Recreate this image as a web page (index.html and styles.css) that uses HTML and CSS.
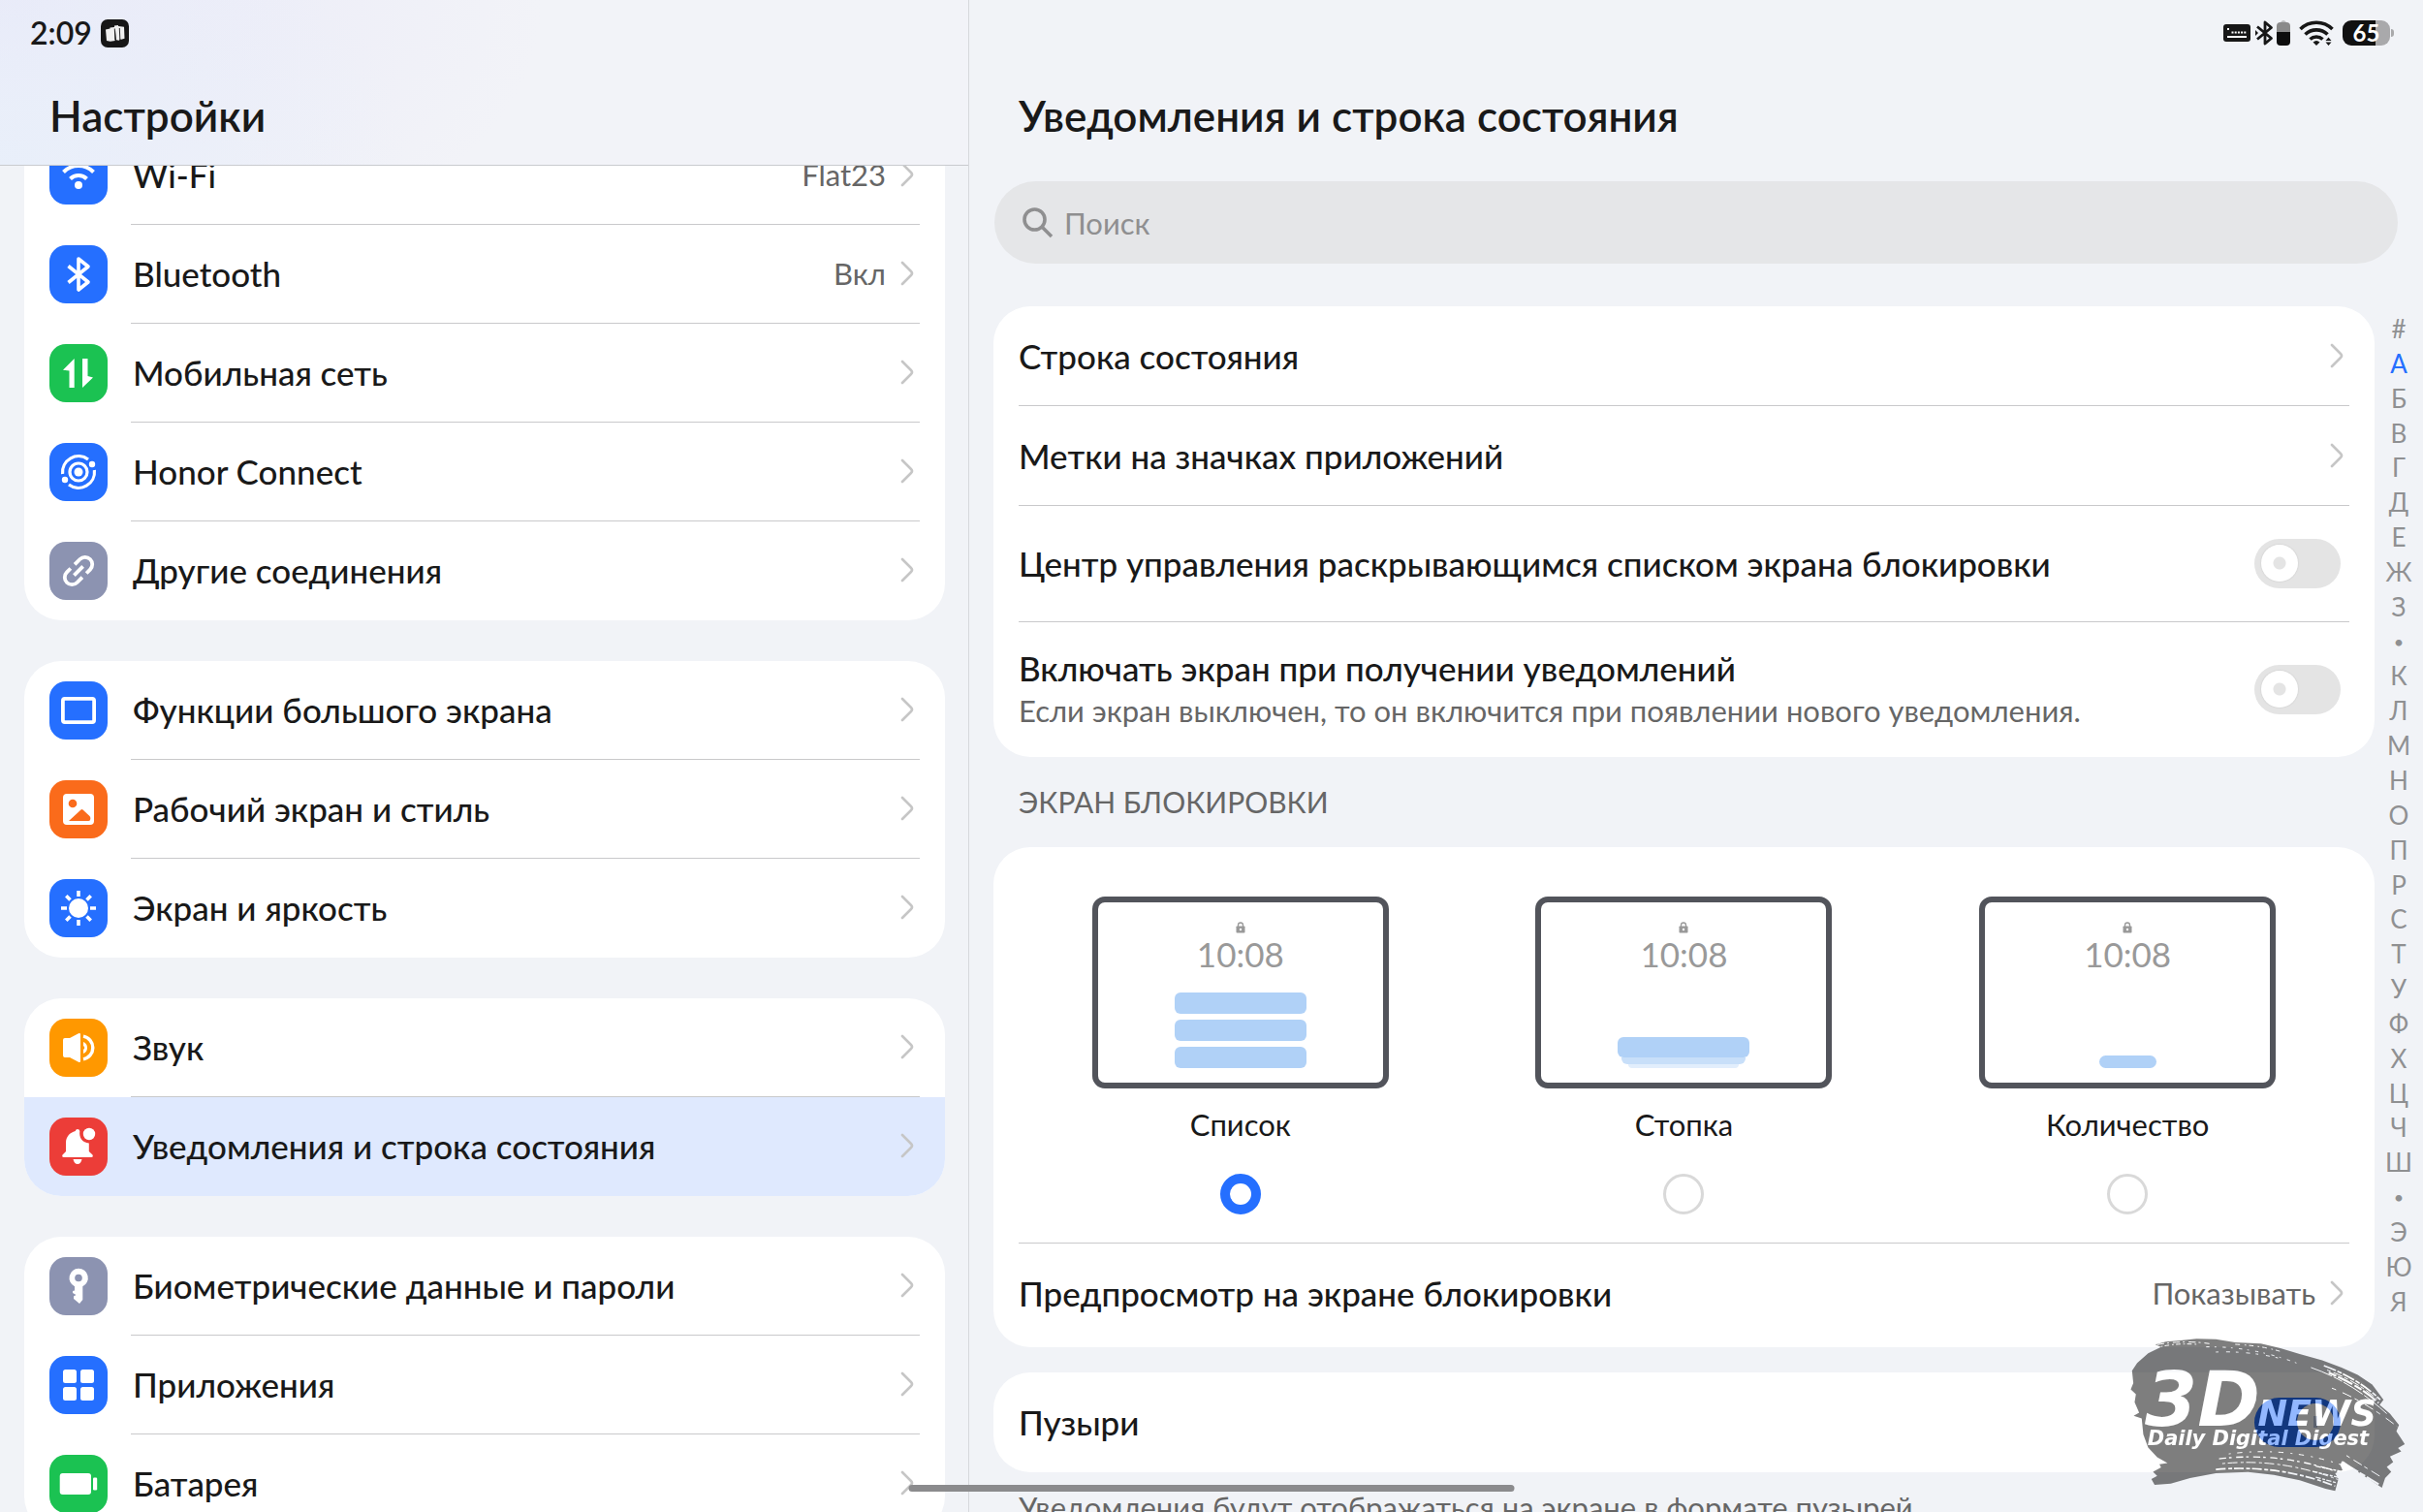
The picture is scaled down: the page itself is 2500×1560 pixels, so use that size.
FILE: index.html
```
<!DOCTYPE html>
<html lang="ru">
<head>
    <meta charset="UTF-8">
    <meta name="viewport" content="width=device-width, initial-scale=1.0">
    <title>Настройки</title>
    <link rel="stylesheet" href="styles.css">
</head>
<body>
    <!-- Общие символы -->
    <svg class="defs" aria-hidden="true">
        <symbol id="chevron" viewBox="0 0 14 26">
            <path d="M2 2l9 9q2 2 0 4l-9 9" fill="none" stroke="#c6c6c6" stroke-width="2.6" stroke-linecap="round"/>
        </symbol>
        <symbol id="lock" viewBox="0 0 10 12">
            <path d="M2.5 5V3.500a2.500 2.500 0 0 1 5 0V5" fill="none" stroke="#999" stroke-width="1.300"/>
            <rect x="0.500" y="4.500" width="9" height="7" rx="0.800" fill="#999"/>
            <circle cx="5" cy="8" r="1.200" fill="#fff"/>
        </symbol>
    </svg>

    <!-- Левая панель -->
    <aside class="sidebar">
        <header class="sidebar-header">
            <div class="status-bar">
                <span class="clock">2:09</span>
                <svg class="app-badge" viewBox="0 0 29 29">
                    <rect width="29" height="29" rx="7" fill="#171717"/>
                    <path d="M5 10.500l4.500-1v-1l4.500-.5v-1.500l4-.5v1l6 .8.5 12-3.500 1-1.500-1-.5 2-3-.5-1-10-.5.2.300 10.500-5 .8L6 22z" fill="#f0f0f0"/>
                    <path d="M14.300 9.500l.6 12M19.300 9l.5 11" stroke="#171717" stroke-width=".9"/>
                </svg>
            </div>
            <h1>Настройки</h1>
        </header>

        <nav class="menu">
            <ul class="card">
                <li><a class="menu-row" href="#wifi">
                    <svg class="icon blue" viewBox="0 0 60 60"><g fill="none" stroke="#fff" stroke-width="4"><path d="M14.500 26.500a22 22 0 0 1 31 0M21.500 33.500a12 12 0 0 1 17 0"/></g><circle cx="30" cy="40" r="4" fill="#fff"/></svg>
                    <span class="menu-body"><span class="menu-title">Wi-Fi</span><span class="value">Flat23</span><svg class="chevron"><use href="#chevron"/></svg></span>
                </a></li>
                <li><a class="menu-row" href="#bluetooth">
                    <svg class="icon blue" viewBox="0 0 60 60"><path d="M19.500 21.500L40 38l-10 8V14l10 8-20.500 16.500" fill="none" stroke="#fff" stroke-width="3.600" stroke-linejoin="round"/></svg>
                    <span class="menu-body"><span class="menu-title">Bluetooth</span><span class="value">Вкл</span><svg class="chevron"><use href="#chevron"/></svg></span>
                </a></li>
                <li><a class="menu-row" href="#mobile">
                    <svg class="icon green" viewBox="0 0 60 60"><path d="M25.700 15v30h-5.200V27.500L14 26.700zM34 15h5.500v18l5.500 1.500L34 45z" fill="#fff"/></svg>
                    <span class="menu-body"><span class="menu-title">Мобильная сеть</span><svg class="chevron"><use href="#chevron"/></svg></span>
                </a></li>
                <li><a class="menu-row" href="#connect">
                    <svg class="icon blue" viewBox="0 0 60 60"><g fill="none" stroke="#fff" stroke-width="3.200"><circle cx="30" cy="30" r="9"/><path d="M40 17A16.500 16.500 0 0 0 13.600 32M20 43A16.500 16.500 0 0 0 46.400 28"/></g><g fill="#fff"><circle cx="30" cy="30" r="4.500"/><circle cx="44" cy="22" r="3.200"/><circle cx="16" cy="38" r="3.200"/></g></svg>
                    <span class="menu-body"><span class="menu-title">Honor Connect</span><svg class="chevron"><use href="#chevron"/></svg></span>
                </a></li>
                <li><a class="menu-row" href="#other">
                    <svg class="icon grey" viewBox="0 0 60 60"><path transform="rotate(-45 30 30)" d="M32 22.500h7.500a7.500 7.500 0 0 1 0 15H34M28 37.500h-7.500a7.500 7.500 0 0 1 0-15H26M23.500 30h13" fill="none" stroke="#fff" stroke-width="3.800"/></svg>
                    <span class="menu-body"><span class="menu-title">Другие соединения</span><svg class="chevron"><use href="#chevron"/></svg></span>
                </a></li>
            </ul>

            <ul class="card">
                <li><a class="menu-row" href="#bigscreen">
                    <svg class="icon blue" viewBox="0 0 60 60"><rect x="13.900" y="17.900" width="32.200" height="24.200" rx="2" fill="none" stroke="#fff" stroke-width="3.800"/></svg>
                    <span class="menu-body"><span class="menu-title">Функции большого экрана</span><svg class="chevron"><use href="#chevron"/></svg></span>
                </a></li>
                <li><a class="menu-row" href="#home">
                    <svg class="icon orange" viewBox="0 0 60 60"><rect x="14" y="14" width="32" height="32" rx="4" fill="#fff"/><circle cx="24" cy="24" r="4.300" fill="#fa6b1b"/><path d="M20 42l12.500-11.500q1-1 2 0l7 6.500q.8.800.800 2v1q0 2-2 2z" fill="#fa6b1b"/></svg>
                    <span class="menu-body"><span class="menu-title">Рабочий экран и стиль</span><svg class="chevron"><use href="#chevron"/></svg></span>
                </a></li>
                <li><a class="menu-row" href="#display">
                    <svg class="icon blue" viewBox="0 0 60 60"><circle cx="30" cy="30" r="10" fill="#fff"/><path d="M30 12v6M30 42v6M12 30h6M42 30h6M17.300 17.300l4.200 4.200M38.500 38.500l4.200 4.200M17.300 42.700l4.200-4.200M38.500 21.500l4.200-4.200" stroke="#fff" stroke-width="3.600"/></svg>
                    <span class="menu-body"><span class="menu-title">Экран и яркость</span><svg class="chevron"><use href="#chevron"/></svg></span>
                </a></li>
            </ul>

            <ul class="card">
                <li><a class="menu-row" href="#sound">
                    <svg class="icon amber" viewBox="0 0 60 60"><path d="M14 22q0-2 2-2h5l9-4.700q2-.8 2 1v27.400q0 1.800-2 1L21 40h-5q-2 0-2-2z" fill="#fff"/><g fill="none" stroke="#fff" stroke-width="3.400"><path d="M35 18.200a12 12 0 0 1 0 23.600"/></g><path d="M35 24a6.500 6.500 0 0 1 0 12v-4q2.500-2 0-4z" fill="#fff"/></svg>
                    <span class="menu-body"><span class="menu-title">Звук</span><svg class="chevron"><use href="#chevron"/></svg></span>
                </a></li>
                <li><a class="menu-row active" href="#notifications" aria-current="page">
                    <svg class="icon red" viewBox="0 0 60 60"><path d="M29 12q2 0 2.300 2c-1 7 3 12 9.500 12.500V35l3.700 3.500q1 2.500-1.500 2.500H15q-2.500 0-1.500-2.500L17 35V26c0-6 4-10.500 9.700-12q.5-2 2.300-2z" fill="#fff"/><path d="M24.500 43h9q-1 5-4.500 5t-4.500-5z" fill="#fff"/><circle cx="41" cy="17" r="6.200" fill="#fff"/></svg>
                    <span class="menu-body"><span class="menu-title">Уведомления и строка состояния</span><svg class="chevron"><use href="#chevron"/></svg></span>
                </a></li>
            </ul>

            <ul class="card">
                <li><a class="menu-row" href="#biometrics">
                    <svg class="icon grey" viewBox="0 0 60 60"><path d="M30 11.700a9.800 9.800 0 0 1 4.300 18.600V44L31 48l-6-5v-2.500l2.500-1.500L24 37v-2l2-.5V30.300A9.800 9.800 0 0 1 30 11.700z" fill="#fff"/><circle cx="30" cy="21.500" r="3.800" fill="#8c93b1"/></svg>
                    <span class="menu-body"><span class="menu-title">Биометрические данные и пароли</span><svg class="chevron"><use href="#chevron"/></svg></span>
                </a></li>
                <li><a class="menu-row" href="#apps">
                    <svg class="icon blue" viewBox="0 0 60 60" fill="#fff"><rect x="14" y="14" width="14" height="14" rx="2.500"/><rect x="32" y="14" width="14" height="14" rx="2.500"/><rect x="14" y="32" width="14" height="14" rx="2.500"/><rect x="32" y="32" width="14" height="14" rx="2.500"/></svg>
                    <span class="menu-body"><span class="menu-title">Приложения</span><svg class="chevron"><use href="#chevron"/></svg></span>
                </a></li>
                <li><a class="menu-row" href="#battery">
                    <svg class="icon green" viewBox="0 0 60 60" fill="#fff"><rect x="10.700" y="19" width="32.300" height="22" rx="3"/><rect x="45" y="23.500" width="4.200" height="13" rx="1.200"/></svg>
                    <span class="menu-body"><span class="menu-title">Батарея</span><svg class="chevron"><use href="#chevron"/></svg></span>
                </a></li>
            </ul>
        </nav>
    </aside>

    <!-- Правая панель -->
    <main class="content">
        <div class="status-bar status-right">
            <svg class="st-keyboard" viewBox="0 0 28 18"><rect width="28" height="18" rx="3" fill="#171717"/><path d="M4 13h20" stroke="#fff" stroke-width="2"/><path d="M4 5h2.500M8.500 8.500h16" stroke="#fff" stroke-width="2" stroke-dasharray="2 1.200"/></svg>
            <svg class="st-bluetooth" viewBox="0 0 19 26"><path d="M2 6.500l14.500 12-6.500 5.500V2l6.500 5.500L2 19.500" fill="none" stroke="#171717" stroke-width="2.800" stroke-linejoin="round"/><path d="M0 10l3 3-3 3z" fill="#171717"/></svg>
            <svg class="st-device" viewBox="0 0 14 26"><path d="M4 1.500q3-2 6 0z" fill="#8a8a8a"/><path d="M0 13V6q0-4 4-4h6q4 0 4 4v7z" fill="#8a8a8a"/><path d="M0 12h14v10q0 4-4 4H4q-4 0-4-4z" fill="#0d0d0d"/></svg>
            <svg class="st-wifi" viewBox="0 0 36 26"><g fill="none" stroke="#171717" stroke-width="3.600"><path d="M1.500 9a23.500 23.500 0 0 1 33 0M6.500 14.500a16.500 16.500 0 0 1 23 0M11.500 19.500a9.500 9.500 0 0 1 13 0"/></g><path d="M14.500 22.500q3.500-3 7 0L18 26z" fill="#171717"/><path d="M30.500 17.500l3 3.500h-6zM30.500 26l3-3.500h-6z" fill="#171717"/></svg>
            <div class="st-battery"><span>65</span></div>
        </div>

        <h2>Уведомления и строка состояния</h2>

        <label class="search">
            <svg viewBox="0 0 32 32"><circle cx="12.500" cy="12.500" r="10.500"/><path d="M20 20l10 10"/></svg>
            <input type="search" placeholder="Поиск" aria-label="Поиск">
        </label>

        <div class="content-grid">
            <div class="cards">
                <section class="card">
                    <a class="row" href="#statusbar"><span class="row-title">Строка состояния</span><svg class="chevron"><use href="#chevron"/></svg></a>
                    <a class="row" href="#badges"><span class="row-title">Метки на значках приложений</span><svg class="chevron"><use href="#chevron"/></svg></a>
                    <label class="row row-toggle"><span class="row-title">Центр управления раскрывающимся списком экрана блокировки</span><input class="toggle" type="checkbox"></label>
                    <label class="row row-double">
                        <span class="row-title">Включать экран при получении уведомлений<small>Если экран выключен, то он включится при появлении нового уведомления.</small></span>
                        <input class="toggle" type="checkbox">
                    </label>
                </section>

                <h3>ЭКРАН БЛОКИРОВКИ</h3>

                <section class="card">
                    <div class="previews">
                        <label class="preview">
                            <span class="frame">
                                <svg class="lock"><use href="#lock"/></svg>
                                <span class="frame-time">10:08</span>
                                <span class="bars"><i></i><i></i><i></i></span>
                            </span>
                            <span class="preview-name">Список</span>
                            <input class="radio" type="radio" name="lockStyle" checked>
                        </label>
                        <label class="preview">
                            <span class="frame">
                                <svg class="lock"><use href="#lock"/></svg>
                                <span class="frame-time">10:08</span>
                                <span class="stack"><i></i><i></i><i></i></span>
                            </span>
                            <span class="preview-name">Стопка</span>
                            <input class="radio" type="radio" name="lockStyle">
                        </label>
                        <label class="preview">
                            <span class="frame">
                                <svg class="lock"><use href="#lock"/></svg>
                                <span class="frame-time">10:08</span>
                                <span class="pill"></span>
                            </span>
                            <span class="preview-name">Количество</span>
                            <input class="radio" type="radio" name="lockStyle">
                        </label>
                    </div>
                    <a class="row row-preview" href="#lockpreview"><span class="row-title">Предпросмотр на экране блокировки</span><span class="value">Показывать</span><svg class="chevron"><use href="#chevron"/></svg></a>
                </section>

                <section class="card card-bubbles">
                    <label class="row"><span class="row-title">Пузыри</span><input class="toggle" type="checkbox" checked></label>
                </section>
                <p class="note">Уведомления будут отображаться на экране в формате пузырей.</p>
            </div>

            <nav class="alphabet" aria-label="Алфавит">
                <a href="#">#</a><a href="#" class="current">А</a><a href="#">Б</a><a href="#">В</a><a href="#">Г</a><a href="#">Д</a><a href="#">Е</a><a href="#">Ж</a><a href="#">З</a><a href="#" class="dot">•</a><a href="#">К</a><a href="#">Л</a><a href="#">М</a><a href="#">Н</a><a href="#">О</a><a href="#">П</a><a href="#">Р</a><a href="#">С</a><a href="#">Т</a><a href="#">У</a><a href="#">Ф</a><a href="#">Х</a><a href="#">Ц</a><a href="#">Ч</a><a href="#">Ш</a><a href="#" class="dot">•</a><a href="#">Э</a><a href="#">Ю</a><a href="#">Я</a>
            </nav>
        </div>
    </main>

    <div class="home-bar"></div>

    <!-- Водяной знак -->
    <svg class="watermark" viewBox="230 260 860 490">
        <mask id="brush">
            <rect x="230" y="260" width="860" height="490" fill="#fff"/>
            <g fill="none" stroke="#000" stroke-width="3">
                <path d="M318 291Q400 276 480 288" stroke-dasharray="22 9 6 12"/>
                <path d="M330 297Q380 286 440 290" stroke-dasharray="5 7 14 9"/>
                <path d="M470 298Q620 296 760 352" stroke-dasharray="10 16 5 20"/>
                <path d="M500 314Q600 310 700 334" stroke-dasharray="8 24 12 18"/>
                <path d="M560 290Q640 294 700 312" stroke-dasharray="14 14 5 9"/>
                <path d="M795 362Q920 405 1030 505" stroke-dasharray="70 6 30 5"/>
                <path d="M835 356Q940 395 1010 462" stroke-dasharray="40 5 15 4" stroke-width="5"/>
                <path d="M850 378Q950 420 1005 472" stroke-dasharray="25 6 50 8" stroke-width="6"/>
                <path d="M845 370Q930 400 1000 460" stroke-dasharray="12 9 30 7"/>
                <path d="M860 426Q960 465 1062 545" stroke-dasharray="14 22 30 12"/>
                <path d="M510 645Q700 622 890 690" stroke-dasharray="22 9 8 14" stroke-width="4"/>
                <path d="M520 660Q700 642 880 710" stroke-dasharray="9 8 30 10"/>
                <path d="M500 678Q700 662 870 730" stroke-dasharray="30 8 12 6" stroke-width="5"/>
                <path d="M540 630Q720 606 890 664" stroke-dasharray="6 20 16 22"/>
                <path d="M810 668L888 684M800 684L885 704M810 702L875 720" stroke-dasharray="16 5 9 4" stroke-width="4"/>
                <path d="M890 655L1005 724" stroke-dasharray="60 5 20 6" stroke-width="6"/>
                <path d="M905 635L1010 700" stroke-dasharray="12 14 30 9"/>
            </g>
        </mask>
        <g opacity=".5">
            <path mask="url(#brush)" d="M312 291L345 282L390 278L440 273L500 274L560 284L640 288L700 302L760 320L830 340L890 362L940 385L985 415L1020 462L1008 478L1040 505L1068 540L1060 560L1086 600L1065 612L1075 622L1040 638L1050 655L1030 670L1044 685L1025 705L1015 735L985 715L940 685L895 652L885 662L893 680L870 690L880 708L870 745L840 738L760 712L680 695L600 686L500 690L420 705L360 722L310 726L300 708L318 698L305 685L330 672L325 662L350 658L318 640L290 610L275 570L270 520L245 512L262 502L248 470L252 445L236 430L244 410L240 372L256 348L290 318L330 298Z" fill="#000"/>
            <g class="watermark-text">
                <text class="wm-3d" x="280" y="544">3D</text>
                <text class="wm-news" x="630" y="544">NEWS</text>
                <text class="wm-sub" x="288" y="602">Daily Digital Digest</text>
            </g>
        </g>
    </svg>
</body>
</html>
```
FILE: styles.css
```
* {
    box-sizing: border-box;
}

body {
    display: grid;
    grid-template-columns: 2fr 3fr;
    height: 100vh;
    margin: 0;
    overflow: hidden;
    font-family: Lato, "Noto Sans", sans-serif;
    font-size: 35px;
    line-height: 44px;
    color: #191919;
    background: #f1f3f7;
}

a {
    color: inherit;
    text-decoration: none;
}

.defs {
    position: absolute;
    width: 0;
    height: 0;
}

h1,
h2 {
    margin: 0;
    font-size: 44px;
    font-weight: 600;
    line-height: 102px;
}

/* Строка состояния */
.status-bar {
    display: flex;
    align-items: center;
    height: 68px;
}

.clock {
    font-size: 32px;
    font-weight: 600;
}

.app-badge {
    width: 29px;
    height: 29px;
    margin-left: 9px;
}

.status-right {
    justify-content: flex-end;
    padding-right: 34px;
}

.st-keyboard {
    width: 28px;
    height: 18px;
    margin-right: 5px;
}

.st-bluetooth {
    width: 19px;
    height: 26px;
    margin-right: 3px;
}

.st-device {
    width: 14px;
    height: 26px;
    margin-right: 9px;
}

.st-wifi {
    width: 36px;
    height: 26px;
    margin-right: 9px;
}

.st-battery {
    position: relative;
    width: 49px;
    height: 26px;
    border-radius: 9px;
    background: linear-gradient(90deg, #111 70%, #a9a9ab 70%);
    color: #fff;
    font-size: 24px;
    font-weight: 700;
    line-height: 26px;
    text-align: center;
}

.st-battery::after {
    content: "";
    position: absolute;
    top: 9px;
    right: -4px;
    width: 3px;
    height: 8px;
    border-radius: 0 4px 4px 0;
    background: #a9a9ab;
}

/* Левая панель */
.sidebar {
    display: flex;
    flex-direction: column;
    min-height: 0;
    border-right: 1px solid #d6d8dc;
}

.sidebar-header {
    flex: none;
    border-bottom: 1px solid #c9cbcf;
    background:
        radial-gradient(ellipse 420px 300px at 0 100%, rgba(232, 239, 250, 0.9), rgba(232, 239, 250, 0)),
        radial-gradient(ellipse 560px 320px at 0 0, #e9e9f8, rgba(233, 233, 248, 0)),
        #f2f3f8;
}

.sidebar-header .status-bar {
    padding-left: 31px;
}

.sidebar h1 {
    padding-left: 51px;
}

.menu {
    flex: 1;
    min-height: 0;
    padding: 0 24px 0 25px;
    overflow: hidden;
}

.card {
    margin: 0;
    padding: 0;
    overflow: hidden;
    list-style: none;
    border-radius: 38px;
    background: #fff;
}

.menu .card {
    margin-bottom: 42px;
}

/* список прокручен вниз */
.menu .card:first-child {
    margin-top: -41px;
}

.menu-row {
    display: flex;
    align-items: center;
    gap: 24px;
    height: 102px;
    padding: 0 26px;
}

.menu-row.active {
    background: #dfe9fe;
}

.menu-body {
    display: flex;
    flex: 1;
    align-items: center;
    height: 102px;
    padding: 0 6px 2px 2px;
    border-bottom: 1px solid #c9c9cb;
    font-weight: 500;
}

li:last-child .menu-body {
    border-bottom-color: transparent;
}

.menu-title {
    flex: 1;
}

.value {
    margin-right: 15px;
    color: #666;
    font-size: 31px;
    font-weight: 400;
}

.chevron {
    flex: none;
    width: 14px;
    height: 26px;
}

.icon {
    flex: none;
    width: 60px;
    height: 60px;
    border-radius: 17px;
}

.blue {
    background: #256fff;
}

.green {
    background: #1bc252;
}

.grey {
    background: #8c93b1;
}

.orange {
    background: #fa6b1b;
}

.amber {
    background: #ff9800;
}

.red {
    background: #ec3d38;
}

/* Правая панель */
.content {
    min-width: 0;
    padding-left: 25px;
}

.content h2 {
    padding-left: 26px;
}

.search {
    display: flex;
    align-items: center;
    gap: 11px;
    height: 85px;
    margin: 17px 26px 44px 1px;
    padding: 0 29px;
    border-radius: 43px;
    background: #e5e6e8;
}

.search svg {
    width: 32px;
    height: 32px;
    fill: none;
    stroke: #8f8f90;
    stroke-width: 3.6;
}

.search input {
    flex: 1;
    padding: 0;
    border: 0;
    outline: 0;
    background: none;
    color: #191919;
    font: inherit;
    font-size: 31px;
}

.search input::placeholder {
    color: #8f8f90;
    opacity: 1;
}

.content-grid {
    display: grid;
    grid-template-columns: 1fr 50px;
}

.cards .card {
    padding: 0 26px;
}

.row {
    display: flex;
    align-items: center;
    height: 103px;
    padding: 0 6px 1px 0;
    border-bottom: 1px solid #c9c9cb;
    font-weight: 500;
}

.row:last-child {
    border-bottom: 0;
}

.row-title {
    flex: 1;
}

.row-title small {
    display: block;
    color: #666;
    font-size: 31px;
    font-weight: 400;
}

.row-toggle {
    height: 120px;
}

.row-double {
    height: 139px;
}

.row-preview {
    height: 107px;
    padding-bottom: 5px;
}

/* Переключатель */
.toggle {
    appearance: none;
    flex: none;
    display: flex;
    align-items: center;
    width: 89px;
    height: 51px;
    margin: 0 3px;
    padding: 0 7px;
    border-radius: 26px;
    background: #e4e4e4;
}

.toggle::before {
    content: "";
    width: 38px;
    height: 38px;
    border-radius: 50%;
    background: radial-gradient(circle, #e4e4e4 6px, #fff 7px);
    box-shadow: 0 0 2px rgba(0, 0, 0, 0.15);
}

.toggle:checked {
    justify-content: flex-end;
    background: #256fff;
}

.toggle:checked::before {
    background: linear-gradient(#b8c4dc, #b8c4dc) center / 4px 12px no-repeat, #fff;
}

h3 {
    margin: 0;
    padding-left: 26px;
    color: #666;
    font-size: 30px;
    font-weight: 400;
    line-height: 93px;
}

/* Варианты экрана блокировки */
.previews {
    display: grid;
    grid-template-columns: repeat(3, 1fr);
    padding: 51px 0 29px;
    border-bottom: 1px solid #c9c9cb;
}

.preview {
    display: flex;
    flex-direction: column;
    align-items: center;
}

.frame {
    display: flex;
    flex-direction: column;
    align-items: center;
    width: 306px;
    height: 198px;
    padding: 20px 0 15px;
    border: 6px solid #52545b;
    border-radius: 13px;
}

.lock {
    width: 10px;
    height: 12px;
}

.frame-time {
    margin-top: 3px;
    color: #999;
    font-size: 35px;
    line-height: 36px;
}

.bars,
.stack {
    display: flex;
    flex-direction: column;
    align-items: center;
    margin-top: auto;
}

.bars {
    gap: 6px;
}

.bars i {
    width: 136px;
    height: 22px;
    border-radius: 6px;
    background: #b0d1f7;
}

.stack i {
    width: 136px;
    height: 21px;
    border-radius: 6px;
    background: #b0d1f7;
}

.stack i + i {
    width: 128px;
    height: 7px;
    border-radius: 0 0 6px 6px;
    background: #c8dff9;
}

.stack i + i + i {
    width: 114px;
    height: 4px;
    background: #e2eefc;
}

.pill {
    width: 59px;
    height: 13px;
    margin-top: auto;
    border-radius: 7px;
    background: #b0d1f7;
}

.preview-name {
    margin-top: 17px;
    font-size: 31px;
    line-height: 40px;
}

.radio {
    appearance: none;
    width: 42px;
    height: 42px;
    margin: 31px 0 0;
    border: 3px solid #d9d9d9;
    border-radius: 50%;
}

.radio:checked {
    border: 10px solid #256fff;
}

.card-bubbles {
    margin-top: 26px;
}

.note {
    margin: 16px 26px 0;
    color: #666;
    font-size: 31px;
    line-height: 40px;
    white-space: nowrap;
}

/* Алфавитный указатель */
.alphabet {
    display: flex;
    flex-direction: column;
    align-items: center;
    align-self: start;
    justify-content: space-between;
    height: 1045px;
    padding-top: 6px;
    color: #8f9092;
    font-size: 26px;
    line-height: 35px;
}

.alphabet .current {
    color: #256fff;
}

.alphabet .dot {
    font-size: 18px;
}

.home-bar {
    position: absolute;
    left: 50%;
    bottom: 21px;
    width: 25%;
    height: 7px;
    border-radius: 4px;
    background: #8b8b8d;
    transform: translateX(-50%);
}

.watermark {
    position: absolute;
    right: 17px;
    bottom: 20px;
    width: 287px;
    height: 163px;
}

.watermark-text {
    fill: #fff;
    font-family: "DejaVu Sans", sans-serif;
    font-weight: 700;
    font-style: italic;
}

.wm-3d {
    font-size: 234px;
}

.wm-news {
    font-size: 110px;
}

.wm-sub {
    font-size: 63px;
}
```
